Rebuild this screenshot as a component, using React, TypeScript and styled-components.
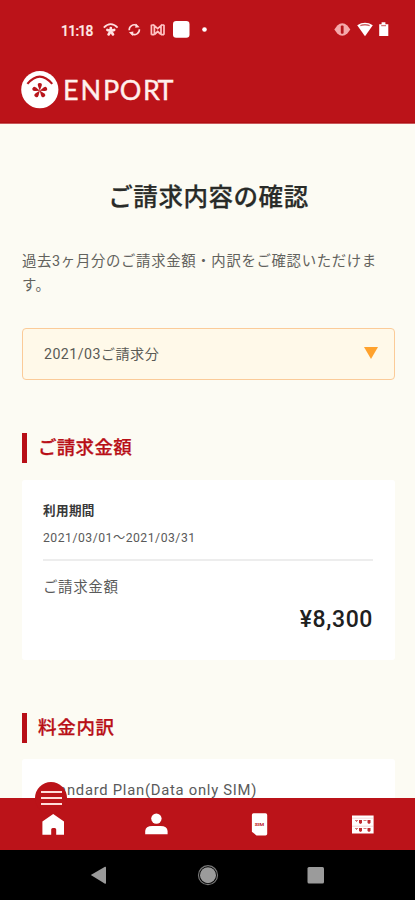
import React from "react";
import styled, { createGlobalStyle } from "styled-components";

const RED = "#bb1319";

const GlobalStyle = createGlobalStyle`
  * { box-sizing: border-box; }
  body { margin: 0; background: #fbfaf2; }
  h1, h2, p { margin: 0; }
  svg { display: block; }
`;

const Screen = styled.div`
  width: 415px;
  height: 900px;
  display: flex;
  flex-direction: column;
  overflow: hidden;
  background: #fcfbf3;
  color: #5a5a5a;
  font-family: Roboto, "Noto Sans CJK JP", sans-serif;
`;

const Header = styled.header`
  flex: 0 0 124px;
  background: ${RED};
  border-bottom: 1px solid #c9575a;
  box-shadow: inset 0 -1px 0 #b00e12;
`;

const StatusBar = styled.div`
  height: 60px;
  padding: 0 26px 0 61px;
  display: flex;
  align-items: center;
  color: #ffe9e7;
`;

const Clock = styled.span`
  width: 42px;
  font-size: 13.8px;
  font-weight: 500;
  line-height: 20px;
  letter-spacing: -0.65px;
  -webkit-text-stroke: 0.2px #ffe9e7;
  padding-top: 1px;
`;

const StatusIcons = styled.svg`
  margin-right: auto;
`;

const Brand = styled.div`
  height: 60px;
  padding-left: 20px;
`;

const Content = styled.main`
  flex: 1;
  min-height: 0;
  overflow: hidden;
  padding: 55px 20px 0 22px;
`;

const Title = styled.h1`
  height: 36px;
  line-height: 37px;
  font-size: 24.5px;
  font-weight: 500;
  letter-spacing: 0.55px;
  -webkit-text-stroke: 0.25px #292b28;
  color: #292b28;
  text-align: center;
`;

const Lead = styled.p`
  margin-top: 35px;
  height: 47px;
  line-height: 23.5px;
  font-size: 14.4px;
  letter-spacing: 0.66px;
  color: #62625d;
`;

const Select = styled.button`
  margin: 31px 0 0;
  width: 100%;
  height: 52px;
  padding: 0 16px 2px 21px;
  display: flex;
  align-items: center;
  justify-content: space-between;
  background: #fff9e9;
  border: 1px solid #fbcb98;
  border-radius: 4px;
  font-family: inherit;
  font-size: 14.2px;
  letter-spacing: 0.45px;
  color: #5a5a55;
`;

const SectionTitle = styled.h2<{ $tracking: number }>`
  margin-top: 53px;
  height: 30px;
  padding-left: 11px;
  border-left: 5px solid #b80f17;
  font-size: 18.5px;
  font-weight: 500;
  -webkit-text-stroke: 0.25px #b80f17;
  line-height: 30px;
  letter-spacing: ${({ $tracking }) => $tracking}px;
  color: #b80f17;
`;

const Card = styled.section<{ $height: number; $gap: number }>`
  margin-top: ${({ $gap }) => $gap}px;
  height: ${({ $height }) => $height}px;
  padding: 20px 22px 0 21px;
  background: #fff;
  border-radius: 3px;
`;

const CardHeading = styled.p`
  height: 22px;
  line-height: 22px;
  font-size: 12.6px;
  font-weight: 700;
  letter-spacing: 0.35px;
  color: #383838;
`;

const Period = styled.p`
  height: 39px;
  padding-top: 5px;
  line-height: 22px;
  font-size: 12.2px;
  letter-spacing: 0.51px;
  border-bottom: 2px solid #ededed;
`;

const ItemLabel = styled.p`
  height: 41px;
  padding-top: 15px;
  line-height: 24px;
  font-size: 14.5px;
  letter-spacing: 0.6px;
`;

const Amount = styled.p`
  line-height: 35px;
  font-size: 23px;
  font-weight: 500;
  letter-spacing: 0.6px;
  text-align: right;
  color: #202020;
`;

const PlanName = styled.p`
  margin-top: 3px;
  height: 17px;
  line-height: 17px;
  font-size: 14.8px;
  letter-spacing: 0.74px;
`;

const TabBar = styled.nav`
  position: relative;
  flex: 0 0 52px;
  display: flex;
  justify-content: space-between;
  padding: 15px 41px 0 42px;
  background: ${RED};
`;

const TabIcon = styled.svg`
  width: 23px;
  height: 23px;
`;

const MenuButton = styled.div`
  position: absolute;
  left: 35px;
  top: -16px;
  width: 32px;
  height: 32px;
  border-radius: 50%;
  background: ${RED};
  display: flex;
  flex-direction: column;
  align-items: center;
  gap: 4px;
  padding-top: 9px;
`;

const MenuLine = styled.span`
  width: 21px;
  height: 2px;
  background: #ffdcda;
`;

const SystemBar = styled.footer`
  flex: 0 0 50px;
  background: #000;
`;

const Notifications = () => (
  <StatusIcons width="110" height="20" viewBox="103 20 110 20" fill="none" stroke="#fff">
    <path d="M103.8 27.6Q110.7 20.6 117.6 27.6" strokeWidth="1.8" stroke="#ffdcdc" />
    <g stroke="#ffe2e2" strokeWidth="2.7" strokeLinecap="round">
      <path d="M110.8 31V28M110.8 31l3.4-1M110.8 31l2.2 3.4M110.8 31l-2.2 3.4M110.8 31l-3.4-1" />
    </g>
    <g stroke="#ffdcdc" strokeWidth="1.6">
      <path d="M129.2 30.2a5 5 0 0 1 7.6-4.6M139.4 29.2a5 5 0 0 1-7.6 4.6" />
      <path d="M135.8 23.4l3.8 3.8-4.4.6zM132.8 36l-3.9-3.8 4.5-.6z" fill="#ffdcdc" stroke="none" />
    </g>
    <g stroke="#ffc4c4" strokeWidth="1.7">
      <path d="M154.4 34.5V25.7l3.3 3 3.3-3v8.8M151.4 24.8v10M164 24.8v10M154.4 34.5l3.3-3 3.3 3M151.4 25h2l2 2M164 25h-2l-2 2M151.4 34.7h3M164 34.7h-3" />
    </g>
    <rect x="173" y="21" width="16.5" height="16.7" rx="3.2" fill="#fff" stroke="none" />
    <circle cx="204.5" cy="29.5" r="2.3" fill="#fff" stroke="none" />
  </StatusIcons>
);

const DeviceState = () => (
  <svg width="56" height="20" viewBox="333 20 56 20">
    <path d="M334.3 29.6l3-4q5-4.5 10 0l3 4-3 4q-5 4.5-10 0z" fill="#f5a9aa" />
    <rect x="340.8" y="25.4" width="2.8" height="8.4" rx="1" fill="#b6151b" />
    <path d="M357.2 25.3Q365 20.4 372.8 25.3L365 36.3z" fill="#fff" />
    <path d="M360.3 25.7Q365 23.8 369.7 25.7" stroke="#cf6669" strokeWidth="1.3" fill="none" />
    <path d="M380 24.2h1.6V22.3h3.8v1.9H388.3V36H379.2V24.2z" fill="#fff" />
    <path d="M381.2 25.6h4.8" stroke="#d27678" strokeWidth="1.3" />
  </svg>
);

const petals = [0, 72, 144, 216, 288];

const Logo = () => (
  <svg width="160" height="60" viewBox="20 60 160 60">
    <circle cx="39.8" cy="89.7" r="18.6" fill="#fff" />
    <path d="M27.4 83.9Q39.8 69.3 52.2 83.9" fill="none" stroke="#b8151b" strokeWidth="2.2" />
    {petals.map((angle) => (
      <path
        key={angle}
        transform={`rotate(${angle} 39.8 90.6)`}
        d="M39.8 90.8L38 86Q37 83 39.8 83Q42.6 83 41.6 86z"
        fill="#b8151b"
      />
    ))}
    <text
      x="63 80.4 103.1 119.8 143 157.5"
      y="100"
      fill="#fff0ed"
      stroke="#fff0ed"
      strokeWidth=".4"
      fontFamily="Lato, sans-serif"
      fontSize="27"
    >
      ENPORT
    </text>
  </svg>
);

export default function App() {
  return (
    <>
      <GlobalStyle />
      <Screen lang="ja">
        <Header>
          <StatusBar>
            <Clock>11:18</Clock>
            <Notifications />
            <DeviceState />
          </StatusBar>
          <Brand>
            <Logo />
          </Brand>
        </Header>
        <Content>
          <Title>ご請求内容の確認</Title>
          <Lead>過去3ヶ月分のご請求金額・内訳をご確認いただけます。</Lead>
          <Select>
            <span>2021/03ご請求分</span>
            <svg width="14" height="12" viewBox="0 0 14 12">
              <path d="M0 0h14L7 12z" fill="#ffa22d" />
            </svg>
          </Select>
          <SectionTitle $tracking={0.3}>ご請求金額</SectionTitle>
          <Card $height={180} $gap={17}>
            <CardHeading>利用期間</CardHeading>
            <Period>2021/03/01～2021/03/31</Period>
            <ItemLabel>ご請求金額</ItemLabel>
            <Amount>¥8,300</Amount>
          </Card>
          <SectionTitle $tracking={0.7}>料金内訳</SectionTitle>
          <Card $height={60} $gap={16}>
            <PlanName>Standard Plan(Data only SIM)</PlanName>
          </Card>
        </Content>
        <TabBar>
          <TabIcon viewBox="42 813 23 23">
            <path d="M53.2 814L64 821.6V834.8H56.2V829.5a1.5 1.5 0 0 0-1.5-1.5h-2a1.5 1.5 0 0 0-1.5 1.5V834.8H42.4V821.6z" fill="#fff" />
          </TabIcon>
          <TabIcon viewBox="145 813 23 23">
            <circle cx="156.4" cy="818.6" r="5.2" fill="#fff" />
            <path d="M145.2 834.2v-3.2q.4-5 7-5h8.4q6.6 0 7 5v3.2z" fill="#fff" />
          </TabIcon>
          <TabIcon viewBox="248.5 813 23 23">
            <path d="M254 813.3H266q1.7 0 1.7 1.7V834q0 1.4-1.7 1.4h-9l-4.6-3.6V815q0-1.7 1.6-1.7z" fill="#fff" />
            <text x="255.3" y="826.3" fontSize="4" fontWeight="700" fill={RED} textLength="9.4" lengthAdjust="spacingAndGlyphs">SIM</text>
          </TabIcon>
          <TabIcon viewBox="351 813 23 23">
            <rect x="352" y="815.5" width="21.6" height="18" fill="#fff" />
            <path d="M352 818.2h21.6M352 826.2h21.6" stroke="#e8aaac" strokeWidth=".5" />
            <path d="M355 820.5h3M356.5 820.5v1.5M363.5 820.5h3M355 828.5h3M356.5 828.5v1.5M363.5 828.5h3" stroke="#d77b7d" strokeWidth="1" fill="none" />
            <path d="M359 820h3v3l-1.5 1-1.5-1zM367.5 820h3v3l-1.5 1-1.5-1zM359 828h3v3l-1.5 1-1.5-1zM367.5 828h3v3l-1.5 1-1.5-1z" fill="#c02a2f" />
          </TabIcon>
          <MenuButton>
            <MenuLine />
            <MenuLine />
            <MenuLine />
          </MenuButton>
        </TabBar>
        <SystemBar>
          <svg width="415" height="50" viewBox="0 850 415 50">
            <path d="M90.8 875L105 866.8q1-.3 1 .7V883q0 1-1 .7z" fill="#9a9a9a" />
            <circle cx="208" cy="875.2" r="9.5" fill="none" stroke="#777" strokeWidth="1.2" />
            <circle cx="208" cy="875.2" r="8" fill="#9b9b9b" />
            <rect x="307.5" y="867" width="16.5" height="16.5" rx="1.5" fill="#9b9b9b" />
          </svg>
        </SystemBar>
      </Screen>
    </>
  );
}
